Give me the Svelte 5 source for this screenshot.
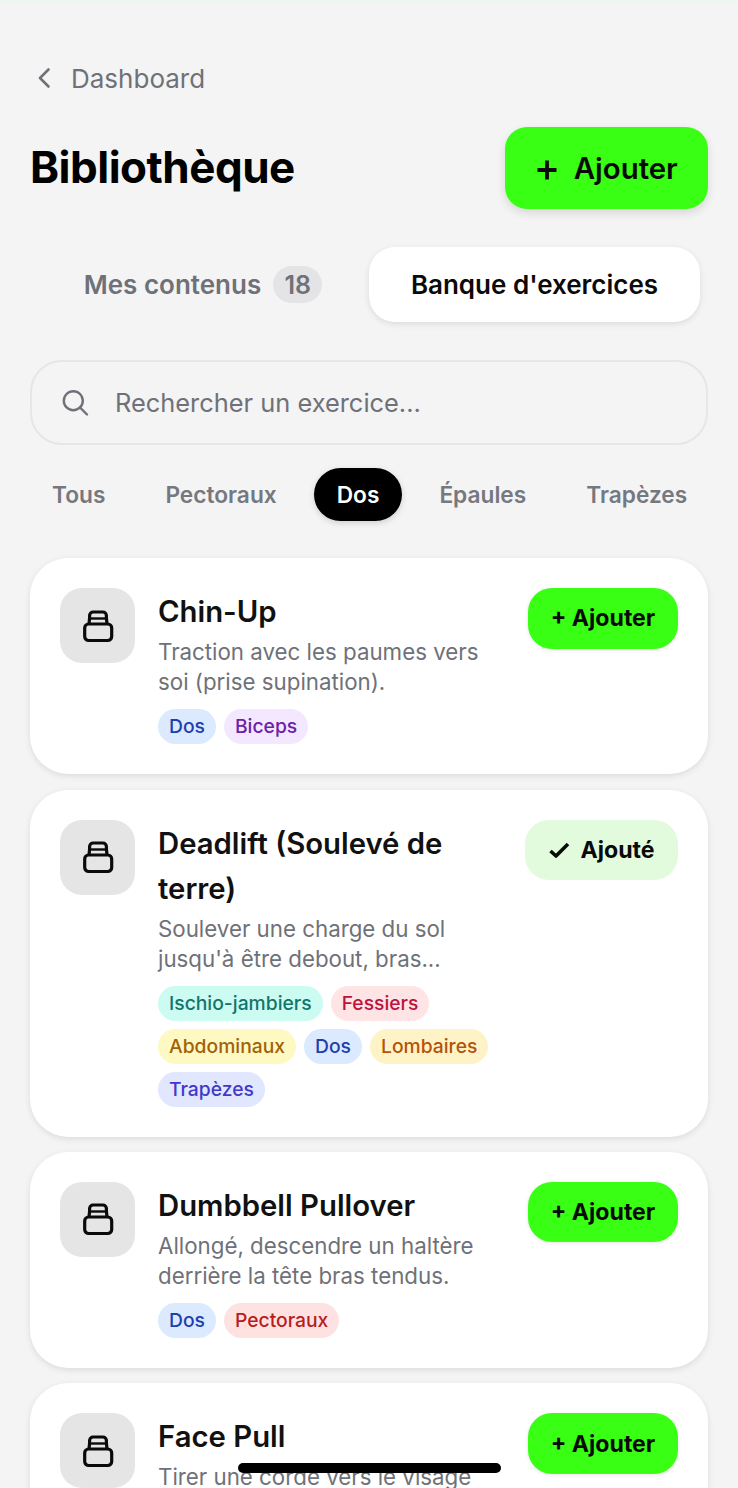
<script>
  const cards = [
    { title: 'Chin-Up', desc: ['Traction avec les paumes vers', 'soi (prise supination).'], tags: [['Dos','blue'],['Biceps','purple']] },
    { title: 'Deadlift (Soulevé de terre)', desc: ['Soulever une charge du sol', "jusqu'à être debout, bras..."], added: true, tags: [['Ischio-jambiers','teal'],['Fessiers','rose'],['Abdominaux','yellow'],['Dos','blue'],['Lombaires','amber'],['Trapèzes','indigo']] },
    { title: 'Dumbbell Pullover', desc: ['Allongé, descendre un haltère', 'derrière la tête bras tendus.'], tags: [['Dos','blue'],['Pectoraux','red']] },
    { title: 'Face Pull', desc: ['Tirer une corde vers le visage'], tags: [] }
  ];
  const chips = ['Tous', 'Pectoraux', 'Dos', 'Épaules', 'Trapèzes'];
</script>

<main class="page">
  <div class="tint"></div>
  <a class="back" href="#top">
    <svg width="28" height="28" viewBox="0 0 28 28" fill="none"><path d="M18.500 5.500 10 14l8.500 8.500" stroke="#6f7178" stroke-width="2.600" stroke-linecap="round" stroke-linejoin="round"/></svg>
    <span>Dashboard</span>
  </a>

  <header class="head">
    <h1>Bibliothèque</h1>
    <button class="add-main">
      <svg width="24" height="24" viewBox="0 0 24 24" fill="none"><path d="M12 2.500v19M2.500 12h19" stroke="#0a0a0a" stroke-width="3.800"/></svg>
      <span>Ajouter</span>
    </button>
  </header>

  <nav class="tabs">
    <div class="tab">Mes contenus <span class="count">18</span></div>
    <div class="tab active">Banque d'exercices</div>
  </nav>

  <div class="search">
    <svg width="30" height="30" viewBox="0 0 30 30" fill="none"><circle cx="14.300" cy="12.700" r="9.500" stroke="#6f7178" stroke-width="2.400"/><path d="m21 19.500 7 7" stroke="#6f7178" stroke-width="2.400" stroke-linecap="round"/></svg>
    <span>Rechercher un exercice...</span>
  </div>

  <div class="chips">
    {#each chips as c}
      <span class="chip" class:on={c === 'Dos'}>{c}</span>
    {/each}
  </div>

  <section class="list">
    {#each cards as card}
      <article class="card">
        <div class="thumb">
          <svg width="34" height="34" viewBox="0 0 34 34" fill="none" stroke="#0a0a0a" stroke-width="3.200" stroke-linejoin="round">
            <path d="M8 15 8.600 9V6.500A3.500 3.500 0 0 1 12.100 3h9.800a3.500 3.500 0 0 1 3.500 3.500V9l.6 6" />
            <path d="M9 9.500h16" stroke-width="2.400" />
            <rect x="3.700" y="15" width="27" height="16.500" rx="4" />
          </svg>
        </div>
        <div class="body">
          <h2>{card.title}</h2>
          <p>{#each card.desc as line}<span>{line}</span>{/each}</p>
          {#if card.tags.length}
            <div class="tags">
              {#each card.tags as [t, col]}
                <span class="tag {col}">{t}</span>
              {/each}
            </div>
          {/if}
        </div>
        {#if card.added}
          <button class="act done">
            <svg width="24" height="24" viewBox="0 0 24 24" fill="none"><path d="M2.500 13 8 18 20 6" stroke="#0a0a0a" stroke-width="3.600" stroke-linejoin="round"/></svg>
            Ajouté
          </button>
        {:else}
          <button class="act">+ Ajouter</button>
        {/if}
      </article>
    {/each}
  </section>
  <div class="home"></div>
</main>

<style>
  :global(body) { margin: 0; background: #f4f4f5; }
  .page {
    position: relative;
    width: 738px;
    height: 1488px;
    overflow: hidden;
    box-sizing: border-box;
    padding: 60px 30px 0;
    font-family: Inter, "Liberation Sans", sans-serif;
    color: #0a0a0a;
    background: #f4f4f5;
  }
  .tint { position: absolute; left: 0; top: 0; width: 100%; height: 5px; background: linear-gradient(#edf6ef, #f4f4f5); }
  .back { display: flex; align-items: center; gap: 13px; height: 36px; color: #6f7178; font-size: 26px; text-decoration: none; }
  .head { display: flex; justify-content: space-between; align-items: center; margin-top: 31px; height: 82px; }
  h1 { margin: 0 0 2px; font-size: 44px; font-weight: 700; letter-spacing: -0.5px; color: #000; }
  button { font-family: inherit; border: 0; color: #0a0a0a; padding: 0; }
  .add-main { display: flex; align-items: center; justify-content: center; gap: 14.500px; width: 203px; height: 82px; border-radius: 22px; background: #39ff14; font-size: 29.400px; font-weight: 600; box-shadow: 0 4px 10px rgba(0,0,0,.12); }
  .add-main svg { margin-top: 4px; }
  .tabs { display: flex; align-items: center; margin-top: 38px; height: 75px; }
  .tab { display: flex; align-items: center; justify-content: center; gap: 12px; height: 75px; width: 339px; box-sizing: border-box; padding-left: 7px; font-size: 26px; font-weight: 600; color: #6f7178; }
  .tab.active { width: 331px; padding-left: 0; border-radius: 26px; background: #fff; color: #0a0a0a; box-shadow: 0 2px 6px rgba(0,0,0,.1); }
  .count { display: flex; align-items: center; justify-content: center; width: 49px; height: 37px; border-radius: 19px; background: #e4e4e7; font-size: 25px; }
  .search { display: flex; align-items: center; gap: 26px; height: 85px; margin-top: 38px; padding-left: 27px; box-sizing: border-box; border: 2px solid #e6e6e8; border-radius: 32px; color: #6f7178; font-size: 25.400px; }
  .chips { display: flex; gap: 14px; align-items: center; margin: 23px 0 0 -1px; height: 53px; font-size: 22.700px; font-weight: 600; color: #76787f; }
  .chip { line-height: 53px; padding: 0 23px; }
  .chip.on { background: #000; color: #fff; border-radius: 27px; box-shadow: 0 2px 6px rgba(0,0,0,.15); }
  .list { display: flex; flex-direction: column; gap: 15.400px; margin-top: 37.200px; }
  .card { display: flex; align-items: flex-start; padding: 30px; border-radius: 38px; background: #fff; box-shadow: 0 2px 6px rgba(0,0,0,.1); gap: 23px; }
  .thumb { flex: none; display: flex; align-items: center; justify-content: center; width: 75px; height: 75px; border-radius: 22px; background: #e5e5e5; }
  .body { flex: 1; min-width: 0; padding-top: 1px; }
  h2 { margin: 0 0 3px; font-size: 29.300px; font-weight: 600; line-height: 45px; color: #111; }
  p { margin: 0; font-size: 22.300px; line-height: 30px; color: #6f7178; }
  p span { display: block; white-space: nowrap; }
  .tags { display: flex; flex-wrap: wrap; gap: 8px; margin-top: 12px; }
  .tag { display: block; height: 35px; line-height: 35px; padding: 0 11px; border-radius: 18px; font-size: 19.300px; font-weight: 500; }
  .blue { background: #dbeafe; color: #1e40af; }
  .purple { background: #f3e8ff; color: #6b21a8; }
  .teal { background: #ccfbf1; color: #0f766e; }
  .rose { background: #ffe4e6; color: #be123c; }
  .yellow { background: #fef9c3; color: #a16207; }
  .amber { background: #fef3c7; color: #b45309; }
  .indigo { background: #e0e7ff; color: #4338ca; }
  .red { background: #fee2e2; color: #b91c1c; }
  .act { flex: none; width: 150px; height: 60.500px; border-radius: 24px; background: #39ff14; font-size: 23.100px; font-weight: 700; display: flex; align-items: center; justify-content: center; box-shadow: 0 1px 4px rgba(0,0,0,.1); }
  .act.done { width: 153px; height: 60px; gap: 8px; background: #e2fbdc; box-shadow: none; }
  .home { position: absolute; left: 238px; top: 1463px; width: 263px; height: 10px; border-radius: 5px; background: #000; }
</style>
